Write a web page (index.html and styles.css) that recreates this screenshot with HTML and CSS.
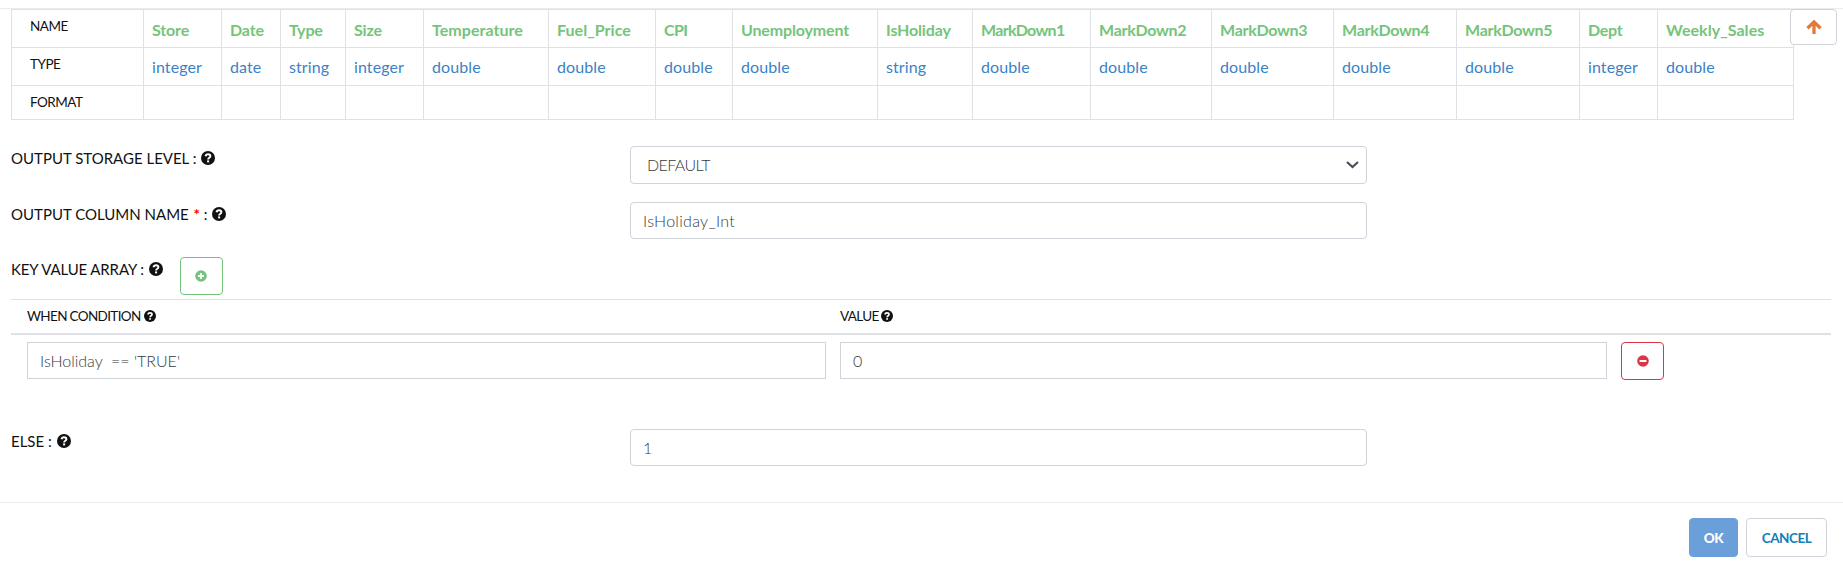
FILE: index.html
```
<!DOCTYPE html>
<html lang="en">
<head>
<meta charset="utf-8">
<title>Case When</title>
<link rel="stylesheet" href="styles.css">
</head>
<body>
<svg class="sprite" aria-hidden="true">
  <symbol id="help" viewBox="0 0 14 14"><circle cx="7" cy="7" r="7" fill="#111"/><path d="M4.500 5.300C4.800 4 5.800 3.300 7 3.300c1.400 0 2.400.8 2.400 1.900 0 1.600-2.300 1.500-2.300 3.200" fill="none" stroke="#fff" stroke-width="1.900"/><rect x="6.100" y="9.400" width="2" height="2" fill="#fff"/></symbol>
</svg>
<div class="dialog">
  <div class="content">
    <div class="schema">
      <div class="grid">
        <div class="head">NAME</div><div class="name">Store</div><div class="name">Date</div><div class="name">Type</div><div class="name">Size</div><div class="name wide">Temperature</div><div class="name wide">Fuel_Price</div><div class="name cpi">CPI</div><div class="name">Unemployment</div><div class="name">IsHoliday</div><div class="name md1">MarkDown1</div><div class="name md">MarkDown2</div><div class="name md">MarkDown3</div><div class="name md">MarkDown4</div><div class="name md">MarkDown5</div><div class="name md">Dept</div><div class="name wide">Weekly_Sales</div>
        <div class="head">TYPE</div><div class="type">integer</div><div class="type">date</div><div class="type">string</div><div class="type">integer</div><div class="type">double</div><div class="type">double</div><div class="type">double</div><div class="type">double</div><div class="type">string</div><div class="type">double</div><div class="type">double</div><div class="type">double</div><div class="type">double</div><div class="type">double</div><div class="type">integer</div><div class="type">double</div>
        <div class="head">FORMAT</div><div></div><div></div><div></div><div></div><div></div><div></div><div></div><div></div><div></div><div></div><div></div><div></div><div></div><div></div><div></div><div></div>
      </div>
      <button class="top-btn" aria-label="Scroll to top"><svg width="16" height="14" viewBox="0 0 16 14"><path d="M8 14V2.500M1.500 8.200L8 1.900l6.500 6.300" fill="none" stroke="#e07b39" stroke-width="3.300"/></svg></button>
    </div>

    <div class="row storage">
      <label>OUTPUT STORAGE LEVEL : <svg class="help"><use href="#help"/></svg></label>
      <div class="field select"><span class="default">DEFAULT</span><svg width="13" height="8" viewBox="0 0 13 8"><path d="M1 1l5.500 5L12 1" fill="none" stroke="#495057" stroke-width="2.200"/></svg></div>
    </div>
    <div class="row column">
      <label>OUTPUT COLUMN NAME <span class="req">*</span> : <svg class="help"><use href="#help"/></svg></label>
      <div class="field">IsHoliday_Int</div>
    </div>
    <div class="row array">
      <label class="tight">KEY VALUE ARRAY : <svg class="help"><use href="#help"/></svg></label>
      <button class="icon-btn add" aria-label="Add"><svg width="12" height="12" viewBox="0 0 12 12"><circle cx="6" cy="6" r="5.800" fill="#74c47b"/><path d="M6 3v6M3 6h6" stroke="#fff" stroke-width="1.800"/></svg></button>
    </div>

    <div class="cases">
      <div class="cases-head">
        <span>WHEN CONDITION <svg class="help small"><use href="#help"/></svg></span>
        <span class="value">VALUE <svg class="help small"><use href="#help"/></svg></span>
      </div>
      <div class="cases-row">
        <div class="field square condition">IsHoliday&nbsp; == 'TRUE'</div>
        <div class="field square">0</div>
        <button class="icon-btn remove" aria-label="Remove"><svg width="12" height="12" viewBox="0 0 12 12"><circle cx="6" cy="6" r="5.800" fill="#dc3545"/><path d="M2.600 6h6.800" stroke="#fff" stroke-width="2"/></svg></button>
      </div>
    </div>

    <div class="row else">
      <label>ELSE : <svg class="help"><use href="#help"/></svg></label>
      <div class="field">1</div>
    </div>
  </div>
  <div class="footer">
    <button class="btn ok">OK</button>
    <button class="btn cancel">CANCEL</button>
  </div>
</div>
</body>
</html>
```
FILE: styles.css
```
* { box-sizing: border-box; }

body {
  margin: 0;
  background: #fff;
  color: #111;
  font: 16px/24px "Lato", sans-serif;
}

button { font-family: inherit; padding: 0; background: #fff; }

.sprite { display: none; }

.dialog { height: 564px; padding-top: 8px; overflow: hidden; }

.content {
  height: 495px;
  border-top: 1px solid #e9ecef;
  border-bottom: 1px solid #e9ecef;
  padding: 0 12px 0 11px;
}

.schema { position: relative; }

.grid {
  display: grid;
  width: 1783px;
  grid-template-columns: 133px 78px 59px 65px 78px 125px 107px 77px 145px 95px 118px 121px 122px 123px 123px 78px 136px;
  grid-template-rows: 38px 38px 34px;
  border-top: 1px solid #dee2e6;
}

.grid > div {
  border-right: 1px solid #dee2e6;
  border-bottom: 1px solid #dee2e6;
  padding-left: 8px;
  white-space: nowrap;
}

.grid > .head {
  border-left: 1px solid #dee2e6;
  padding: 4px 0 0 18px;
  font-size: 13.5px;
  letter-spacing: -0.5px;
}

.grid > .name {
  padding-top: 8px;
  color: #74c47b;
  font-weight: 700;
  letter-spacing: -0.15px;
}

.grid > .wide { letter-spacing: 0.05px; }
.grid > .cpi { letter-spacing: -0.6px; }
.grid > .md { letter-spacing: -0.28px; }
.grid > .md1 { letter-spacing: -0.7px; }

.grid > .type {
  padding-top: 7px;
  color: #3b82c6;
  letter-spacing: 0.1px;
}

.top-btn {
  position: absolute;
  top: 0;
  right: -6px;
  display: flex;
  align-items: center;
  justify-content: center;
  width: 47px;
  height: 36px;
  border: 1px solid #ced4da;
  border-radius: 4px;
}

.row {
  display: grid;
  grid-template-columns: 619px 737px;
  align-items: start;
}

.row label {
  display: flex;
  align-items: center;
  height: 24px;
  font-size: 15px;
  white-space: pre;
}

.row .tight { letter-spacing: -0.12px; }
.req { color: #f00; font-weight: 700; margin-left: 1px; }
.help { width: 14px; height: 14px; margin-left: 1px; }
.small { width: 12px; height: 12px; }

.storage { margin-top: 26px; }
.column { margin-top: 18px; }
.array { display: flex; margin-top: 18px; }
.array label { margin-right: 17px; }

.field {
  height: 37px;
  border: 1px solid #ced4da;
  border-radius: 4px;
  padding: 6px 12px;
  color: #343a40;
  font-weight: 300;
  letter-spacing: 0.3px;
  white-space: pre;
}

.select {
  display: flex;
  align-items: center;
  justify-content: space-between;
  height: 38px;
  padding: 0 7px 0 16px;
}

.default { letter-spacing: -0.6px; }
.square { border-radius: 0; }
.condition { letter-spacing: 0; }

.icon-btn {
  display: flex;
  align-items: center;
  justify-content: center;
  width: 43px;
  height: 38px;
  border: 1px solid #74c47b;
  border-radius: 4px;
}

.remove { border-color: #dc3545; }

.cases { margin-top: 4px; border-top: 1px solid #dee2e6; }

.cases-head {
  display: grid;
  grid-template-columns: 813px 1fr;
  height: 35px;
  padding: 4px 0 0 16px;
  border-bottom: 2px solid #dee2e6;
  font-size: 13.5px;
  letter-spacing: -0.65px;
}

.cases-head span { display: flex; align-items: center; height: 24px; white-space: pre; }

.cases-head .help { width: 12px; height: 12px; margin-left: 1px; }
.cases-head .value .help { margin-left: 0; }

.cases-row {
  display: grid;
  grid-template-columns: 799px 767px 43px;
  column-gap: 14px;
  padding: 7px 0 0 16px;
}

.else { margin-top: 49px; }

.footer {
  display: flex;
  justify-content: flex-end;
  gap: 8px;
  padding: 15px 16px 0 0;
}

.btn {
  height: 39px;
  border: 1px solid #ced4da;
  border-radius: 4px;
  color: #1080b8;
  font-size: 13.5px;
  font-weight: 700;
  letter-spacing: -0.5px;
}

.ok { width: 49px; background: #6a9fda; border-color: #6a9fda; color: #fff; font-weight: 900; }
.cancel { width: 81px; }
```
